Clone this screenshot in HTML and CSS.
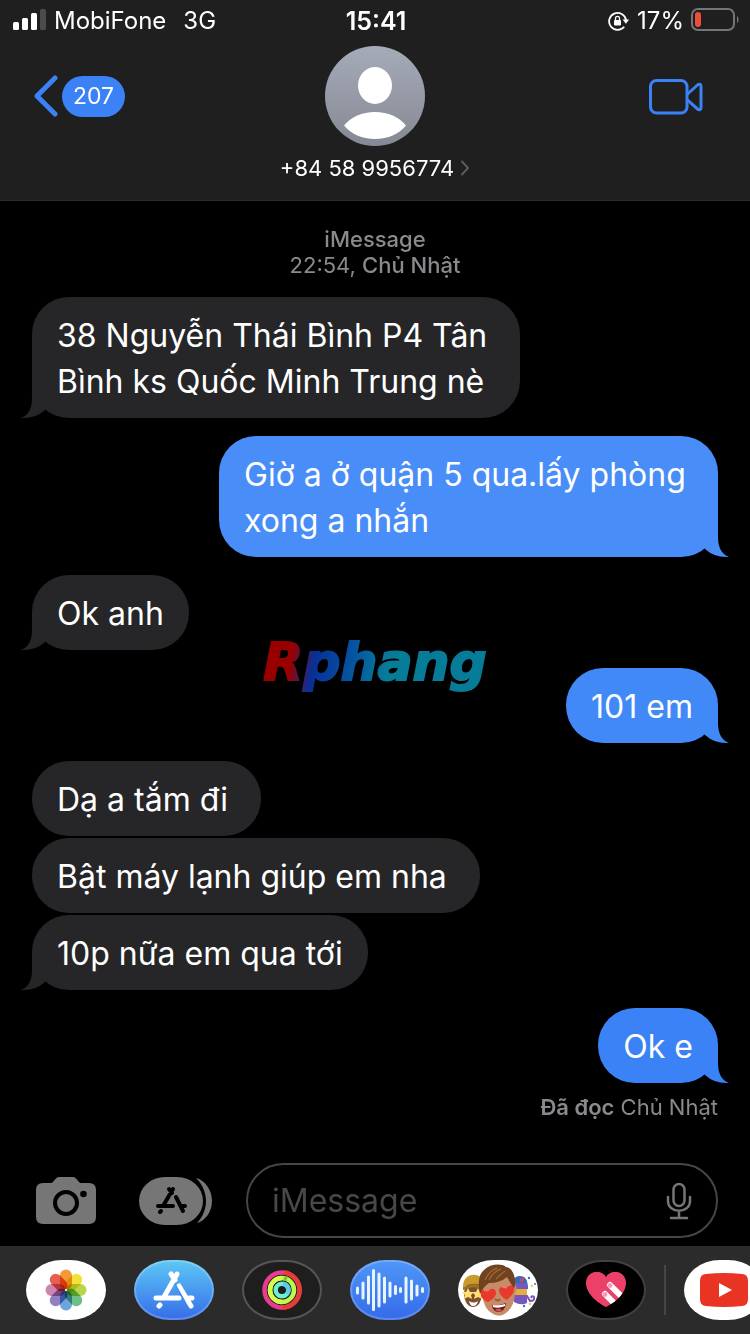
FILE: index.html
```
<!DOCTYPE html>
<html lang="vi">
<head>
  <meta charset="UTF-8" />
  <meta name="viewport" content="width=device-width, initial-scale=1" />
  <title>Messages</title>
  <link rel="stylesheet" href="styles.css">
</head>
<body>
  <!-- BEGIN: Header -->
  <header class="header">
    <div class="status-bar">
      <div class="status-left">
        <svg class="signal" viewBox="0 0 34 22" width="34" height="22">
          <g fill="#fff">
            <rect x="0" y="14" width="6" height="8" rx="1.5"/>
            <rect x="9" y="10" width="6" height="12" rx="1.5"/>
            <rect x="18" y="5" width="6" height="17" rx="1.5"/>
          </g>
          <rect x="27" y="1" width="6" height="21" rx="1.5" fill="#4b4b4b"/>
        </svg>
        <span>MobiFone</span>
        <span class="network">3G</span>
      </div>
      <div class="status-time">15:41</div>
      <div class="status-right">
        <svg viewBox="0 0 22 20" width="22" height="20">
          <path d="M16.200 15.800A8.500 8.500 0 1 1 18 9" fill="none" stroke="#fff" stroke-width="1.800"/>
          <path d="M14.600 8.500h6.600l-3.300 4.300z" fill="#fff"/>
          <rect x="6" y="9" width="7" height="5.500" rx="1" fill="#fff"/>
          <path d="M7.500 9.500V7.400a2 2 0 0 1 4 0v2.100" fill="none" stroke="#fff" stroke-width="1.300"/>
        </svg>
        <span>17%</span>
        <svg class="battery" viewBox="0 0 48 23" width="48" height="23">
          <rect x="1" y="1" width="42" height="21" rx="6" fill="none" stroke="#757575" stroke-width="2"/>
          <path d="M46 8c2 1 2 6 0 7z" fill="#757575"/>
          <rect x="4" y="4" width="6" height="15" rx="3" fill="#eb4e3d"/>
        </svg>
      </div>
    </div>

    <div class="nav">
      <button class="back" aria-label="Back">
        <svg viewBox="0 0 25 42" width="25" height="42">
          <path d="M22 3 4 21l18 18" fill="none" stroke="#3b82f7" stroke-width="5" stroke-linecap="round" stroke-linejoin="round"/>
        </svg>
        <span class="badge">207</span>
      </button>
      <button class="contact">
        <svg viewBox="0 0 100 100" width="100" height="100">
          <defs>
            <linearGradient id="avatar" x1="0" y1="0" x2="0" y2="1">
              <stop offset="0" stop-color="#a6abb9"/>
              <stop offset="1" stop-color="#858993"/>
            </linearGradient>
          </defs>
          <circle cx="50" cy="50" r="50" fill="url(#avatar)"/>
          <ellipse cx="50" cy="39.500" rx="17" ry="18.500" fill="#fff"/>
          <path d="M19 79.500C26 71 37 66 50 66s24 5 31 13.500C74 88 63 93 50 93s-24-5-31-13.500z" fill="#fff"/>
        </svg>
        <span class="phone">+84 58 9956774
          <svg viewBox="0 0 10 16" width="10" height="16">
            <path d="M1.500 1 8 8l-6.500 7" fill="none" stroke="#5b5b5f" stroke-width="2"/>
          </svg>
        </span>
      </button>
      <button class="video" aria-label="FaceTime">
        <svg viewBox="0 0 54 36" width="54" height="36">
          <g fill="none" stroke="#3b82f7" stroke-width="3" stroke-linejoin="round">
            <rect x="1.500" y="1.500" width="36.500" height="32.500" rx="6"/>
            <path d="M38 15.500 48.500 6c1.500-1.300 3.500-1 3.500 1v22c0 2-2 2.300-3.500 1L38 20.500"/>
          </g>
        </svg>
      </button>
    </div>
  </header>
  <!-- END: Header -->

  <!-- BEGIN: Messages -->
  <main class="messages">
    <div class="timestamp"><b>iMessage</b><br>22:54, <b>Chủ Nhật</b></div>

    <div class="bubble received tail">38 Nguyễn Thái Bình P4 Tân Bình ks Quốc Minh Trung nè</div>
    <div class="bubble sent tail first">Giờ a ở quận 5 qua.lấy phòng xong a nhắn</div>
    <div class="bubble received tail">Ok anh</div>
    <div class="bubble sent tail second">101 em</div>
    <div class="bubble received roomy">Dạ a tắm đi</div>
    <div class="bubble received roomy grouped">Bật máy lạnh giúp em nha</div>
    <div class="bubble received grouped tail">10p nữa em qua tới</div>
    <div class="bubble sent tail">Ok e</div>
    <div class="receipt"><b>Đã đọc</b> Chủ Nhật</div>

    <div class="watermark">Rphang</div>
  </main>
  <!-- END: Messages -->

  <!-- BEGIN: Composer -->
  <form class="composer">
    <button type="button" aria-label="Camera">
      <svg viewBox="0 0 60 47" width="60" height="47">
        <path d="M7 6h8c3 0 4-6 8-6h14c4 0 5 6 8 6h8q7 0 7 7v27q0 7-7 7H7q-7 0-7-7V13q0-7 7-7z" fill="#767676"/>
        <circle cx="30" cy="26" r="11" fill="none" stroke="#000" stroke-width="4"/>
        <circle cx="47.500" cy="17" r="3.300" fill="#000"/>
      </svg>
    </button>
    <button type="button" class="apps-button" aria-label="Apps">
      <svg viewBox="0 0 73 48" width="73" height="48">
        <path d="M57 1c9 2 16 12 16 23s-7 20-15 22c5-5 9-13 9-22S63 7 57 1z" fill="#767676"/>
        <rect width="64" height="48" rx="26" ry="24" fill="#767676"/>
        <g fill="none" stroke="#000" stroke-width="4" stroke-linecap="round">
          <path d="M30 12l3 4M34 12 24 29M19 29h15M37 20l7 14M42 29h4M22 34l-1 1"/>
        </g>
      </svg>
    </button>
    <div class="field">
      <input type="text" placeholder="iMessage" aria-label="iMessage">
      <button type="button" aria-label="Dictate">
        <svg viewBox="0 0 26 38" width="26" height="38">
          <g fill="none" stroke="#767676" stroke-width="2.500" stroke-linecap="round">
            <rect x="7.500" y="2" width="11" height="22" rx="5.500"/>
            <path d="M2 15v4c0 13 22 13 22 0v-4M13 29v7M5 36h16"/>
          </g>
        </svg>
      </button>
    </div>
  </form>
  <!-- END: Composer -->

  <!-- BEGIN: App Strip -->
  <nav class="app-strip">
    <button class="app photos" aria-label="Photos">
      <svg viewBox="-21 -21 42 42" width="42" height="42">
        <g class="petals">
          <rect x="-6" y="-20.500" width="12" height="20" rx="6" fill="#f19a37"/>
          <rect x="-6" y="-20.500" width="12" height="20" rx="6" fill="#f3e13b" transform="rotate(45)"/>
          <rect x="-6" y="-20.500" width="12" height="20" rx="6" fill="#b9d54c" transform="rotate(90)"/>
          <rect x="-6" y="-20.500" width="12" height="20" rx="6" fill="#6fbd87" transform="rotate(135)"/>
          <rect x="-6" y="-20.500" width="12" height="20" rx="6" fill="#6ba6df" transform="rotate(180)"/>
          <rect x="-6" y="-20.500" width="12" height="20" rx="6" fill="#9281be" transform="rotate(225)"/>
          <rect x="-6" y="-20.500" width="12" height="20" rx="6" fill="#cc86b0" transform="rotate(270)"/>
          <rect x="-6" y="-20.500" width="12" height="20" rx="6" fill="#e7604f" transform="rotate(315)"/>
        </g>
        <circle r="1" fill="#fff"/>
      </svg>
    </button>
    <button class="app store" aria-label="App Store">
      <svg viewBox="0 0 42 38" width="42" height="38">
        <g fill="none" stroke="#fff" stroke-width="5" stroke-linecap="round">
          <path d="M18 3l4 6M24 3 11 26M3 27h23M26 15l12 20M36 27h3M7 34l-1 1"/>
        </g>
        <path d="M22 13l10 18" stroke="#438ff0" stroke-width="1.500"/>
      </svg>
    </button>
    <button class="app fitness" aria-label="Fitness">
      <svg viewBox="-20 -20 40 40" width="40" height="40">
        <g fill="none" stroke-width="4.500">
          <circle r="17.500" stroke="#e93b91"/>
          <path d="M2-17.400A17.500 17.500 0 0 1 0 17.500" stroke="#ea3c34"/>
          <circle r="12" stroke="#b9fb4c"/>
          <path d="M0 12A12 12 0 0 1 0-12" stroke="#d8fb4b"/>
          <path d="M2-12 5-11" stroke="#83bd32"/>
          <circle r="6.300" stroke="#6df0ce"/>
          <path d="M1-6.300A6.300 6.300 0 0 1 5 4" stroke="#5bcde8"/>
        </g>
      </svg>
    </button>
    <button class="app audio" aria-label="Audio">
      <svg viewBox="0 0 70 44" width="70" height="44">
        <path d="M2.500 20v5M8 15v15M13.500 9v26M18.500 2.500v39M24 6v32M29.500 10v24M35 15v13M40.500 18.500v7M45.500 20.500v3M51 10v24M56.500 13v18M62 18v9M67.500 20.500v3" stroke="#e8f5ff" stroke-width="3" stroke-linecap="round"/>
      </svg>
    </button>
    <button class="app memoji" aria-label="Memoji">
      <svg viewBox="0 0 80 60" width="80" height="60">
        <!-- left: gold cap and star eyes -->
        <ellipse cx="15" cy="34" rx="9" ry="13" fill="#7c4f32"/>
        <path d="M5 27C5 18 11 14 18 15c6 1 8 6 8 11q-10-5-21 1z" fill="#c99b2c"/>
        <path d="M5 27q10-5 21-1v3q-12-4-21 1z" fill="#9d741c"/>
        <path d="m10 28 2 4 4 0-3 3 1 4-4-2-4 2 1-4-3-3h4zM20 28l2 4h4l-3 3 1 4-4-2-4 2 1-4-3-3h4z" fill="#ffe06c"/>
        <path d="M11 41q5 3 9 0-1 5-5 5-3 0-4-5z" fill="#fff"/>
        <!-- right: party hat and horn -->
        <path d="M55 20q4-6 11-3c3 2 4 7 4 12H56z" fill="#3568bd"/>
        <path d="M56 23h13v20q-6 3-13-1z" fill="#7657bd"/>
        <path d="M57 29h12v6H57z" fill="#e7ae3b"/>
        <path d="M60 36h9l3 5q5 0 4-4-2-2-3 1" fill="none" stroke="#7657bd" stroke-width="2"/>
        <circle cx="64" cy="20" r="2" fill="#df473f"/>
        <g fill="#3b6dea"><circle cx="71" cy="18" r="1.200"/><circle cx="66" cy="46" r="1.200"/><circle cx="77" cy="24" r="1"/></g>
        <g fill="#f4cf4c"><circle cx="74" cy="26" r="1.300"/><circle cx="72" cy="44" r="1.300"/></g>
        <!-- middle: heart eyes -->
        <path d="M23 25q-3 5 1 9 2 16 11 20 7 4 13-1 8-6 9-19 3-5 0-10L50 14H29z" fill="#c88b67"/>
        <path d="M22 34C20 25 20 15 26 10c6-6 17-7 22-3 8 1 11 14 8 22q-4-7-7-12-7 6-18 6-5 3-7 8z" fill="#70421f"/>
        <path d="M27 20Q31 11 39 8M31 20q5-9 12-11M38 19q5-5 9-8" fill="none" stroke="#9c6534" stroke-width="1.500"/>
        <path d="M30 42c-4-1-8-5-7-9 1-4 5-4 7-1 2-5 8-4 8 1 0 4-4 7-8 9zM49 40c-4-2-8-6-8-10 1-4 5-4 7-1 2-5 8-4 8 0 0 5-4 8-7 11z" fill="#e9392e"/>
        <path d="M26 31q1-2 3 0M44 28q1-2 3 0" fill="none" stroke="#ff8d78"/>
        <path d="M37 39q3 3 5 0" fill="none" stroke="#96593d" stroke-width="2"/>
        <path d="M34 45q7 1 14-2-1 9-8 9-5 0-6-7z" fill="#6d211d"/>
        <path d="M35 45q6 1 12-1v2q-7 3-12 1z" fill="#fff"/>
        <path d="M37 50q4-3 7 0-3 3-7 0z" fill="#ce5754"/>
      </svg>
    </button>
    <button class="app touch" aria-label="Digital Touch">
      <svg viewBox="0 0 40 36" width="40" height="36">
        <defs>
          <clipPath id="heart">
            <path d="M20 35C12 31 0 22 0 11 0-1 15-4 20 5c5-9 20-6 20 6 0 11-12 20-20 24z"/>
          </clipPath>
        </defs>
        <g clip-path="url(#heart)">
          <path d="M0 0h40v36H0z" fill="#eb4169"/>
          <path d="M24 13 44 33M19 22l18 18" stroke="#fff" stroke-width="6" stroke-linecap="round"/>
          <g fill="#f39ab4"><circle cx="24" cy="13.500" r="2.400"/><circle cx="19" cy="22.500" r="2.400"/></g>
        </g>
      </svg>
    </button>
    <span class="divider"></span>
    <button class="app youtube" aria-label="YouTube">
      <svg viewBox="0 0 48 34" width="48" height="34">
        <path d="M6 1Q24-1 42 1q6 0 6 7v18q0 7-6 7-18 2-36 0-6 0-6-7V8q0-7 6-7z" fill="#e93323"/>
        <path d="m19 10 13 7-13 7z" fill="#fff"/>
      </svg>
    </button>
  </nav>
  <!-- END: App Strip -->
</body>
</html>
```
FILE: styles.css
```
:root {
  color-scheme: dark;
  --bar-bg: #1f1f1f;
  --received: #262628;
  --sent: #3b82f7;
  --blue: #3b82f7;
  --muted: #8a8a8e;
}

* {
  box-sizing: border-box;
}
body {
  font-family: Inter, 'Liberation Sans', sans-serif;
  font-size: 22px;
  background: #000;
  color: #fff;
  margin: 0;
  min-height: 100vh;
  display: flex;
  flex-direction: column;
  overflow-x: hidden;
}
button {
  background: none;
  border: none;
  padding: 0;
  color: inherit;
  font: inherit;
  cursor: pointer;
}
svg {
  display: block;
  flex: none;
}

/* header */
.header {
  background: var(--bar-bg);
  border-bottom: 1px solid #2c2c2c;
  padding-bottom: 17px;
}
.status-bar {
  display: grid;
  grid-template-columns: 1fr auto 1fr;
  align-items: center;
  height: 40px;
  padding: 1px 11px 0 13px;
  font-size: 24px;
}
.status-left, .status-right {
  display: flex;
  align-items: center;
  gap: 7px;
}
.signal {
  margin-bottom: 3px;
}
.network {
  margin-left: 10px;
}
.status-time {
  font-size: 25px;
  font-weight: 600;
}
.status-right {
  justify-content: flex-end;
}
.battery {
  margin-bottom: 2px;
}
.nav {
  display: grid;
  grid-template-columns: 1fr auto 1fr;
  align-items: start;
  padding: 6px 47px 0 33px;
}
.back {
  display: flex;
  align-items: center;
  gap: 4px;
  justify-self: start;
  margin-top: 29px;
}
.badge {
  background: var(--blue);
  border-radius: 21px;
  padding: 0 11px;
  font-size: 23px;
  line-height: 41px;
}
.contact {
  display: flex;
  flex-direction: column;
  align-items: center;
  gap: 7px;
  margin-left: 14px;
}
.phone {
  display: flex;
  align-items: center;
  gap: 6px;
  line-height: 30px;
}
.video {
  justify-self: end;
  margin-top: 33px;
}

/* messages */
.messages {
  position: relative;
  flex: 1;
  display: flex;
  flex-direction: column;
  align-items: flex-start;
  padding: 25px 32px 34px;
}
.timestamp {
  align-self: center;
  margin-bottom: 1px;
  text-align: center;
  line-height: 26px;
  color: var(--muted);
}
.timestamp b {
  font-weight: 500;
}
.bubble {
  position: relative;
  margin-top: 18px;
  padding: 16px 25px 13px;
  border-radius: 37px;
  font-size: 32px;
  line-height: 46px;
}
.received {
  background: var(--received);
  max-width: 488px;
}
.sent {
  align-self: flex-end;
  background: var(--sent);
  max-width: 499px;
}
.sent.first {
  background: #488df8;
}
.sent.second {
  background: #4289f8;
}
.roomy {
  padding-right: 33px;
}
.grouped {
  margin-top: 2px;
}
.tail::after {
  content: '';
  position: absolute;
  bottom: 0;
  left: -11px;
  width: 34px;
  height: 38px;
  background: inherit;
  clip-path: path('M11 0V18Q11 34 0 38Q14 39 24 30L34 18V0Z');
}
.sent.tail::after {
  left: auto;
  right: -11px;
  transform: scaleX(-1);
}
.receipt {
  align-self: flex-end;
  margin-top: 11px;
  line-height: 26px;
  color: var(--muted);
}
.receipt b {
  font-weight: 600;
}
.watermark {
  position: absolute;
  top: 431px;
  left: 50%;
  transform: translateX(-50%);
  font: italic bold 52px/60px 'DejaVu Sans', sans-serif;
  -webkit-text-stroke: 2px transparent;
  background: linear-gradient(100deg, #980000 14%, #063099 24%, #064fa0 38%, #067c99 56%);
  background-clip: text;
  -webkit-background-clip: text;
  color: transparent;
  pointer-events: none;
}

/* composer */
.composer {
  display: flex;
  align-items: center;
  padding: 0 32px 8px 36px;
}
.apps-button {
  margin: 0 34px 0 43px;
}
.field {
  flex: 1;
  min-width: 0;
  display: flex;
  align-items: center;
  height: 75px;
  padding: 0 24px;
  border: 2px solid #464646;
  border-radius: 38px;
}
.field input {
  flex: 1;
  min-width: 0;
  padding: 0;
  border: none;
  outline: none;
  background: none;
  color: #fff;
  font: 32px Inter, 'Liberation Sans', sans-serif;
}
.field input::placeholder {
  color: #48484a;
}

/* app strip */
.app-strip {
  display: flex;
  align-items: center;
  gap: 28px;
  height: 88px;
  padding-left: 26px;
  background: #2b2b2b;
  overflow: hidden;
}
.app {
  flex: none;
  display: flex;
  align-items: center;
  justify-content: center;
  width: 80px;
  height: 60px;
  border-radius: 36px / 30px;
  overflow: hidden;
}
.photos, .memoji, .youtube {
  background: #fff;
}
.petals rect {
  mix-blend-mode: multiply;
}
.store {
  background: linear-gradient(#5ec8f5, #356ce9);
  box-shadow: inset 0 0 0 2px rgba(255, 255, 255, 0.2);
}
.fitness {
  background: #1e1e1e;
  border: 2px solid #555;
}
.audio {
  background: linear-gradient(#5097f7, #346aea);
  box-shadow: inset 0 0 0 2px rgba(255, 255, 255, 0.2);
}
.touch {
  background: #000;
  border: 2px solid #404040;
}
.divider {
  flex: none;
  width: 2px;
  height: 50px;
  margin: 0 -10px;
  background: #464646;
}
```
